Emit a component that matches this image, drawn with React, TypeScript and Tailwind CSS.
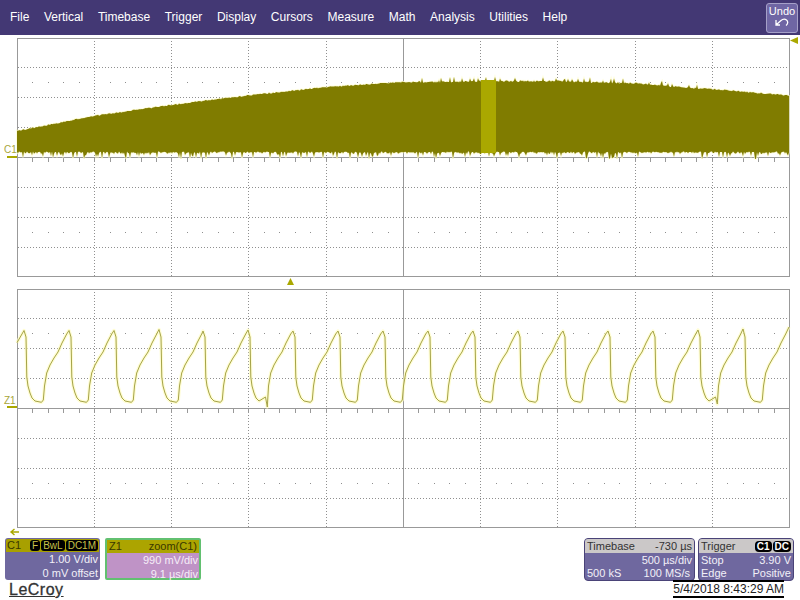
import React from "react";

const VX = [17, 94, 171, 248, 326, 403, 480, 557, 635, 712, 789];

let seed = 12345;
const rnd = () => {
  seed = (seed * 1664525 + 1013904223) % 4294967296;
  return seed / 4294967296;
};

const ENV: [number, number][] = [
  [17, 131], [94, 116], [171, 105], [248, 95.5], [326, 87], [403, 82],
  [480, 80.5], [557, 80.5], [635, 82.5], [712, 89], [789, 95.5],
];
const envY = (x: number) => {
  for (let i = 0; i < ENV.length - 1; i++) {
    const [a, b] = ENV[i];
    const [c, d] = ENV[i + 1];
    if (x <= c) return b + ((d - b) * (x - a)) / (c - a);
  }
  return 95.5;
};

const buildEnvelope = () => {
  const top: string[] = [];
  const bottom: string[] = [];
  for (let x = 17; x <= 789; x++) {
    const wide = x > 420 && x < 700;
    const r = rnd();
    const j = wide ? (r > 0.88 ? -3 * rnd() - 1 : rnd() * 1.6) : rnd() * 1.2 - 0.6;
    top.push(`${x},${(envY(x) + j).toFixed(1)}`);
  }
  for (let x = 789; x >= 17; x--) {
    const r = rnd();
    const y = r > 0.84 ? 155 + rnd() * 4 : r > 0.5 ? 152.5 + rnd() * 1.5 : 151.5 + rnd();
    bottom.push(`${x},${y.toFixed(1)}`);
  }
  return [...top, ...bottom].join(" ");
};
const ENVELOPE = buildEnvelope();

const PEAKS = [24, 69, 114, 159, 203, 248, 293, 338, 383, 428, 473, 518, 563, 608, 653, 698, 743];
const PEAK_Y = [330.5, 330.5, 330.5, 329.5, 331, 330, 331, 331, 331, 331, 331, 331, 331, 331, 331, 330, 329];
const TEMPLATE: [number, number][] = [
  [2, 337], [2.8, 377], [4, 386], [6, 393], [8, 398], [11, 401], [17.5, 402.3],
  [19.3, 400], [20.5, 386], [22.7, 373], [26, 365], [30, 358], [34, 352], [38, 343], [42.7, 334],
];
const buildTrace = () => {
  const pts: string[] = ["17,342.7"];
  PEAKS.forEach((p, i) => {
    pts.push(`${p},${PEAK_Y[i]}`);
    TEMPLATE.forEach(([dx, y], k) => {
      let yy = y;
      if (k === 7 && (p === 248 || p === 698)) yy = p === 248 ? 407 : 404;
      if (k === 6 && (p === 248 || p === 698)) yy = 397;
      pts.push(`${p + dx},${yy}`);
    });
  });
  pts.push("789,327");
  return pts.filter((s) => parseFloat(s) <= 789).join(" ");
};
const TRACE = buildTrace();

function Grid({ top }: { top: number }) {
  const h = 238;
  const bottom = top + h;
  const rows = [29, 59, 89, 149, 179, 209].map((i) => top + i + 0.5);
  const minor: number[] = [];
  for (let i = 1; i < 50; i++) if (i % 5) minor.push(Math.round(17 + (772 / 50) * i) + 0.5);
  const dotRows = [top + 44.5, top + 194.5];
  const midY = top + 119.5;
  return (
    <g shapeRendering="crispEdges" fill="none">
      {rows.map((y) => (
        <line key={y} x1={18} x2={789} y1={y} y2={y} stroke="#8f8f8f" strokeDasharray="1 2" />
      ))}
      {VX.slice(1, -1).map((x) =>
        x === 403 ? null : (
          <line key={x} x1={x + 0.5} x2={x + 0.5} y1={top} y2={bottom} stroke="#8f8f8f" strokeDasharray="1 2" />
        ),
      )}
      {dotRows.map((y) =>
        minor.map((x) => <rect key={`${y}-${x}`} x={x - 0.5} y={y - 0.5} width={1} height={1} fill="#8f8f8f" />),
      )}
      {minor.map((x) => (
        <line key={x} x1={x} x2={x} y1={midY} y2={midY + 4} stroke="#999999" />
      ))}
      {VX.slice(1, -1).map((x) => (
        <line key={x} x1={x + 0.5} x2={x + 0.5} y1={midY} y2={midY + 4} stroke="#999999" />
      ))}
      <rect x={17.5} y={top + 0.5} width={772} height={h} stroke="#999999" />
      <line x1={403.5} x2={403.5} y1={top} y2={bottom} stroke="#999999" />
      <line x1={17} x2={790} y1={midY} y2={midY} stroke="#999999" />
    </g>
  );
}

function Scope() {
  return (
    <svg width={800} height={502} viewBox="0 35 800 502" className="block shrink-0">
      <Grid top={38} />
      <polygon points={ENVELOPE} fill="#fffdd0" stroke="#fffdd0" strokeWidth={1.6} opacity={0.8} />
      <polygon points={ENVELOPE} fill="#807c00" />
      <rect x={481} y={80} width={15} height={73} fill="#aaa800" />
      <Grid top={289} />
      <polyline points={TRACE} fill="none" stroke="#fffcc0" strokeWidth={3.4} opacity={0.7} strokeLinejoin="round" />
      <polyline points={TRACE} fill="none" stroke="#a5a348" strokeWidth={1} strokeLinejoin="round" />
      <text x={4} y={153} fontFamily="'Liberation Sans', sans-serif" fontSize={10} fill="#a8a63a">C1</text>
      <rect x={7} y={156} width={10} height={2} fill="#aaa800" />
      <text x={4} y={404} fontFamily="'Liberation Sans', sans-serif" fontSize={10} fill="#a8a63a">Z1</text>
      <rect x={7} y={406} width={10} height={2} fill="#aaa800" />
      <polygon points="287,285 294,285 290.5,278" fill="#aaa800" />
      <polygon points="790,40.5 798,37 798,44" fill="#aaa800" />
      <path d="M11 532 L19 532 M14.5 529 L11 532 L14.5 535" stroke="#aaa800" strokeWidth={1.4} fill="none" />
    </svg>
  );
}

const Badge = ({ children }: { children: React.ReactNode }) => (
  <span className="rounded-[3px] bg-black px-[2px] text-[10px] leading-[11px] text-[#c8c24a]">
    {children}
  </span>
);
const BadgeW = ({ children }: { children: React.ReactNode }) => (
  <span className="rounded-[4px] bg-black px-[2px] text-[10px] font-bold leading-[11px] text-white">
    {children}
  </span>
);

export default function App() {
  const menu = ["File", "Vertical", "Timebase", "Trigger", "Display", "Cursors", "Measure", "Math", "Analysis", "Utilities", "Help"];
  return (
    <div className="flex h-[600px] w-[800px] flex-col overflow-hidden bg-white font-['Liberation_Sans',sans-serif] text-[11px]">
      <div className="flex h-[35px] shrink-0 items-center justify-between bg-[#433874] pl-[10px] pr-[2px]">
        <div className="flex gap-[14.6px] pb-[1px] text-[12px] text-white">
          {menu.map((m) => (
            <span key={m}>{m}</span>
          ))}
        </div>
        <div className="flex h-[30px] w-[32px] flex-col items-center rounded-[3px] border border-[#a5a0c8] bg-[#6f66a4] pt-[1px] text-[11px] leading-[13px] text-white">
          <span>Undo</span>
          <svg width="14" height="9" viewBox="0 0 14 9" fill="none" stroke="white" strokeWidth="1.3">
            <path d="M1 2 V7 H5 M1.5 6.5 L6 2.5 C7.5 1.2 10 0.8 11.5 2 C13.3 3.5 13 6 11 7.5" />
          </svg>
        </div>
      </div>

      <Scope />

      <div className="flex h-[45px] shrink-0 items-start justify-between pl-[5px] pr-[6px] pt-[1px] leading-[13px]">
        <div className="flex gap-[5px]">
          <div className="flex h-[42px] w-[95px] flex-col rounded-[3px] bg-[#6f689f] p-[1px] pb-0 text-[#f2f0f8]">
            <div className="flex h-[13px] items-center justify-between rounded-t-[2px] bg-[#a8a000] pl-[1px] pr-[1px] text-[#3a3800]">
              <span>C1</span>
              <span className="flex gap-[1px]">
                <Badge>F</Badge>
                <Badge>BwL</Badge>
                <Badge>DC1M</Badge>
              </span>
            </div>
            <div className="pr-[1px] pt-[1px] text-right">1.00 V/div</div>
            <div className="pr-[1px] pt-[1px] text-right">0 mV offset</div>
          </div>
          <div className="flex h-[42px] w-[96px] flex-col rounded-[2px] border-2 border-[#62c070] bg-[#bf93c6] text-[#f6eef8]">
            <div className="flex h-[13px] items-center justify-between bg-[#aca400] px-[2px] text-[#3a3800]">
              <span>Z1</span>
              <span>zoom(C1)</span>
            </div>
            <div className="pr-[1px] pt-[1px] text-right">990 mV/div</div>
            <div className="pr-[1px] pt-[1px] text-right">9.1 µs/div</div>
          </div>
        </div>
        <div className="flex gap-[3px]">
          <div className="flex h-[43px] w-[111px] flex-col rounded-[4px] border border-[#4a4378] bg-[#6f689f] text-[#f2f0f8]">
            <div className="flex h-[14px] items-center justify-between rounded-t-[3px] bg-[#cbc8c8] px-[2px] text-[#333333]">
              <span>Timebase</span>
              <span>-730 µs</span>
            </div>
            <div className="pr-[2px] pt-[1px] text-right">500 µs/div</div>
            <div className="flex justify-between px-[2px]">
              <span>500 kS</span>
              <span className="pr-[2px]">100 MS/s</span>
            </div>
          </div>
          <div className="flex h-[43px] w-[96px] flex-col rounded-[4px] border border-[#4a4378] bg-[#6f689f] text-[#f2f0f8]">
            <div className="flex h-[14px] items-center justify-between rounded-t-[3px] bg-[#cbc8c8] px-[2px] text-[#333333]">
              <span>Trigger</span>
              <span className="flex gap-[1px]">
                <BadgeW>C1</BadgeW>
                <BadgeW>DC</BadgeW>
              </span>
            </div>
            <div className="flex justify-between px-[2px] pt-[1px]">
              <span>Stop</span>
              <span>3.90 V</span>
            </div>
            <div className="flex justify-between px-[2px]">
              <span>Edge</span>
              <span>Positive</span>
            </div>
          </div>
        </div>
      </div>

      <div className="flex flex-1 items-start justify-between pl-[9px] pr-[16px]">
        <span className="text-[16px] leading-[16px] tracking-[0.5px] text-[#333333] underline [-webkit-text-stroke:0.3px_#333333]">LeCroy</span>
        <span className="-mt-[2px] border-y-2 border-black text-[12px] leading-[14px] text-[#222222]">
          5/4/2018 8:43:29 AM
        </span>
      </div>
    </div>
  );
}
